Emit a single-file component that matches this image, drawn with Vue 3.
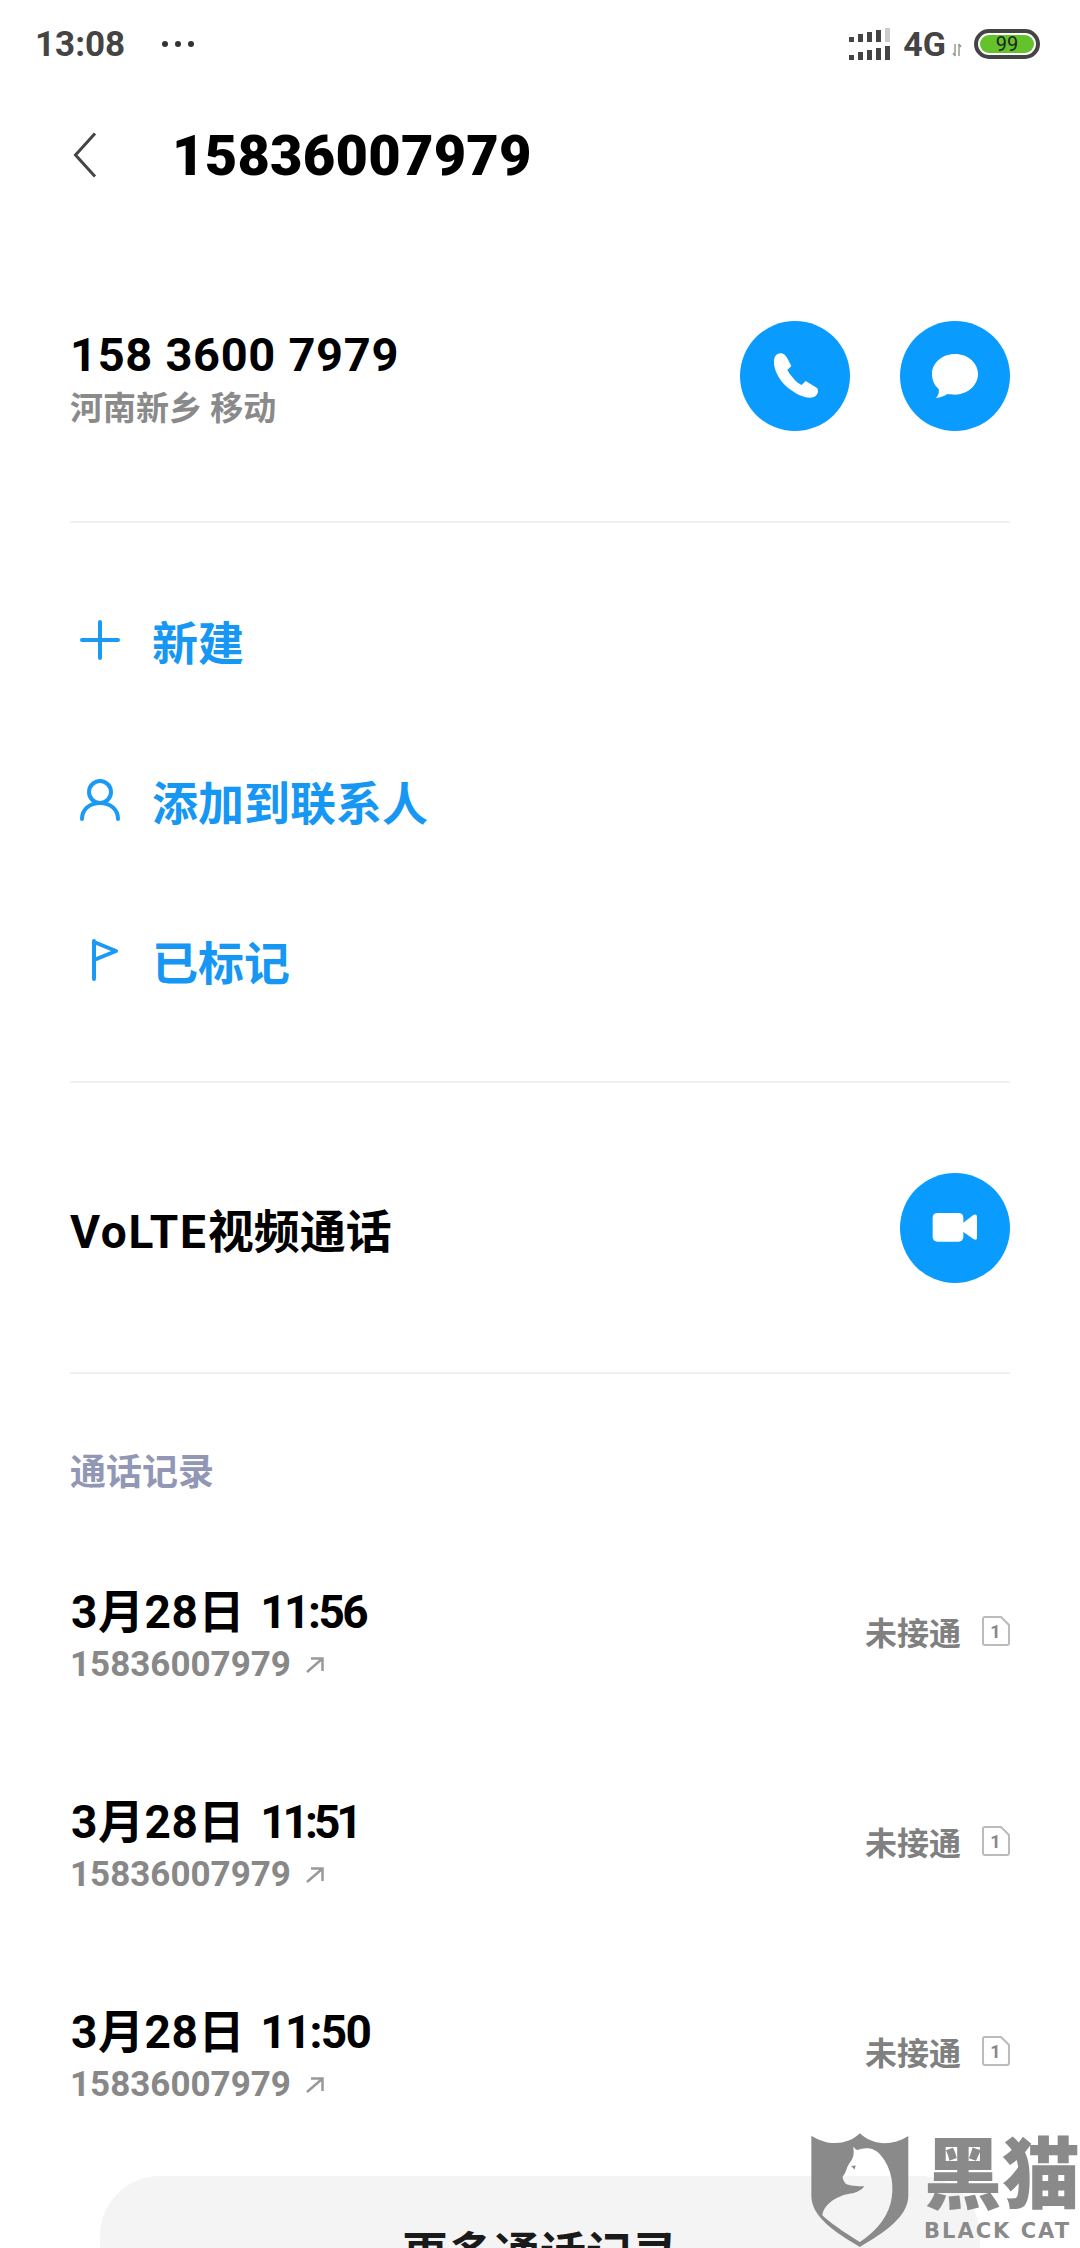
<template>
  <div class="page">
    <div class="status">
      <span class="clock">13:08</span>
      <span class="dots"><i></i><i></i><i></i></span>
      <span class="status-right">
        <svg class="signal" width="42" height="32" viewBox="0 0 42 32">
          <g v-for="y in [0, 18]" :key="y">
            <rect x="0" :y="y + 9" width="5" height="5" fill="#444" />
            <rect x="9" :y="y + 6" width="5" height="8" fill="#444" />
            <rect x="18" :y="y + 4" width="5" height="10" fill="#444" />
            <rect x="27" :y="y + 2" width="5" height="12" fill="#444" />
            <rect x="36" :y="y" width="5" height="14" :fill="y ? '#444' : '#ccc'" />
          </g>
        </svg>
        <span class="net">4G</span>
        <svg class="updown" width="10" height="14" viewBox="0 0 10 14">
          <path d="M3 1v12M3 13l-2-3M7 13V1M7 1l2 3" fill="none" stroke="#999" stroke-width="1.5" />
        </svg>
        <span class="battery"><span class="level">99</span></span>
      </span>
    </div>

    <div class="header">
      <svg class="back" width="24" height="46" viewBox="0 0 24 46">
        <path d="M22 1.5 2.5 23 22 44.5" fill="none" stroke="#444" stroke-width="3" />
      </svg>
      <span class="title">15836007979</span>
    </div>

    <div class="contact section">
      <div class="who">
        <div class="number">158 3600 7979</div>
        <div class="place">河南新乡 移动</div>
      </div>
      <div class="btns">
        <span class="round">
          <svg width="110" height="110" viewBox="120 93 330 330">
            <path fill="#fff" d="M232 192C245 186 255 192 262 205L274 228 262 240C275 262 290 278 305 285L317 273 350 293C358 300 355 315 340 322 320 328 290 315 262 292 235 268 220 235 222 212 222 204 226 196 232 192Z" />
          </svg>
        </span>
        <span class="round">
          <svg width="110" height="110" viewBox="600 93 330 330">
            <path fill="#fff" d="M765 192C805 192 834 220 834 252 834 288 800 314 765 314 755 314 748 313 742 312 733 318 722 323 708 324 716 316 718 305 716 297 703 286 696 270 696 252 696 220 725 192 765 192Z" />
          </svg>
        </span>
      </div>
    </div>

    <div class="actions section">
      <div class="action">
        <svg width="46" height="46" viewBox="0 0 46 46">
          <path d="M23 5v36M5 23h36" fill="none" stroke="#1a9af5" stroke-width="4" stroke-linecap="round" />
        </svg>
        <span>新建</span>
      </div>
      <div class="action">
        <svg width="46" height="46" viewBox="0 0 46 46">
          <circle cx="23" cy="15" r="11" fill="none" stroke="#1a9af5" stroke-width="4" />
          <path d="M5 42C5 32 13 26 23 26S41 32 41 42" fill="none" stroke="#1a9af5" stroke-width="4" stroke-linecap="round" />
        </svg>
        <span>添加到联系人</span>
      </div>
      <div class="action">
        <svg width="46" height="46" viewBox="0 0 46 46">
          <path d="M17 4v38M17 5l22 9-22 9" fill="none" stroke="#1a9af5" stroke-width="4" stroke-linecap="round" stroke-linejoin="round" />
        </svg>
        <span class="marked">已标记</span>
      </div>
    </div>

    <div class="video section">
      <span class="video-label"><span class="volte">VoLTE</span>视频通话</span>
      <span class="round">
        <svg width="110" height="110" viewBox="60 40 330 330">
          <rect x="158" y="160" width="92" height="86" rx="14" fill="#fff" />
          <path fill="#fff" d="M246 192 280 166Q291 162 291 172V234Q291 244 280 238L246 214Z" />
        </svg>
      </span>
    </div>

    <div class="log-label">通话记录</div>
    <div class="log">
      <div v-for="call in calls" :key="call.time" class="call">
        <div>
          <div class="call-time">
            <span class="call-date">3月28日</span>
            <span class="call-clock" :style="{ letterSpacing: call.spacing + 'px' }">{{ call.time }}</span>
          </div>
          <div class="call-num">
            15836007979
            <svg width="18" height="16" viewBox="0 0 18 16">
              <path d="M1 15 16 2M5 1.500h11.500V14" fill="none" stroke="#999" stroke-width="2.500" />
            </svg>
          </div>
        </div>
        <div class="call-state">
          <span>未接通</span>
          <svg width="28" height="30" viewBox="0 0 28 30">
            <path d="M3 1h16l8 8v18a2 2 0 0 1-2 2H3a2 2 0 0 1-2-2V3a2 2 0 0 1 2-2Z" fill="#fff" stroke="#bbb" stroke-width="2" />
            <text x="13.500" y="22" text-anchor="middle" class="sim-num">1</text>
          </svg>
        </div>
      </div>
    </div>

    <div class="more">更多通话记录</div>

    <div class="mark">
      <svg width="98" height="115" viewBox="152 99 293 344">
        <path fill="#8a8a8a" fill-rule="evenodd" d="M153 107C205 140 262 135 298 100 335 135 392 140 443 108V290C440 350 375 395 298 440 222 395 155 350 153 290ZM278 140C284 146 288 150 292 150 310 142 340 140 360 165 395 205 402 262 390 310 375 365 335 400 298 425 250 395 205 365 186 345 190 310 235 285 270 280 290 277 305 268 311 258 290 258 268 258 255 250 248 240 243 232 250 225 258 215 258 200 270 185 278 175 282 160 278 140Z" />
        <path fill="#8a8a8a" d="M272 198 286 196 282 208Z" />
      </svg>
      <div class="mark-text">
        <div class="mark-cn">黑猫</div>
        <div class="mark-en">BLACK CAT</div>
      </div>
    </div>
  </div>
</template>

<script setup>
// the clock digits in the reference are proportional, Roboto's are not
const calls = [
  { time: '11:56', spacing: -2.5 },
  { time: '11:51', spacing: -4 },
  { time: '11:50', spacing: -1.7 }
];
</script>

<style>
html,
body {
  margin: 0;
  background: #fff;
}
</style>

<style scoped>
.page {
  position: relative;
  width: 1080px;
  height: 2248px;
  overflow: hidden;
  background: #fff;
  font-family: Roboto, "Noto Sans CJK SC", sans-serif;
  color: #000;
}

.status {
  display: flex;
  align-items: center;
  height: 88px;
  padding: 0 40px 0 35px;
  box-sizing: border-box;
  color: #444;
}

.clock {
  font-size: 35px;
  font-weight: 700;
}

.dots {
  display: flex;
  gap: 7px;
  margin-left: 37px;
}

.dots i {
  width: 6px;
  height: 6px;
  border-radius: 50%;
  background: #333;
}

.status-right {
  display: flex;
  align-items: center;
  margin-left: auto;
}

.net {
  margin-left: 12px;
  font-size: 34px;
  font-weight: 700;
}

.updown {
  margin: 12px 0 0 6px;
}

.battery {
  display: flex;
  width: 66px;
  height: 30px;
  margin-left: 12px;
  padding: 2px;
  box-sizing: border-box;
  border: 4px solid #444;
  border-radius: 15px;
}

.level {
  flex: 1;
  border-radius: 9px;
  background: #64c22d;
  font-size: 20px;
  line-height: 18px;
  text-align: center;
  color: #222;
}

.header {
  display: flex;
  align-items: center;
  height: 134px;
  padding-left: 73px;
}

.title {
  margin: 2px 0 0 75px;
  font-size: 56px;
  font-weight: 900;
  letter-spacing: 0.25px;
}

.section {
  margin: 0 70px;
  border-bottom: 2px solid #f0f0f0;
}

.contact {
  display: flex;
  align-items: center;
  justify-content: space-between;
  padding: 99px 0 90px;
}

.who {
  padding-top: 4px;
}

.number {
  font-size: 47px;
  font-weight: 700;
  letter-spacing: 0.7px;
}

.place {
  font-size: 33px;
  font-weight: 700;
  color: #8a8a8a;
}

.btns {
  display: flex;
  gap: 50px;
}

.round {
  display: flex;
  width: 110px;
  height: 110px;
  border-radius: 50%;
  background: #0a9bff;
}

.actions {
  padding: 37px 0 41px;
}

.action {
  display: flex;
  align-items: center;
  gap: 29px;
  height: 160px;
  padding-left: 7px;
  font-size: 46px;
  font-weight: 700;
  color: #1597f3;
}

.video {
  display: flex;
  align-items: center;
  justify-content: space-between;
  padding: 90px 0 89px;
}

.video-label {
  font-size: 46px;
  font-weight: 700;
}

.volte {
  letter-spacing: 1.7px;
}

.log-label {
  margin: 76px 70px 0;
  height: 80px;
  font-size: 36px;
  line-height: 46px;
  font-weight: 700;
  color: #9197b5;
}

.call {
  display: flex;
  align-items: center;
  justify-content: space-between;
  height: 210px;
  padding: 0 70px;
}

.call-time {
  display: flex;
  gap: 15px;
  padding-left: 1px;
  font-size: 46px;
  font-weight: 700;
  line-height: 59px;
}

.call-date {
  letter-spacing: 0.6px;
}

.call-num {
  display: flex;
  align-items: center;
  gap: 15px;
  font-size: 35px;
  font-weight: 700;
  line-height: 46px;
  color: #888;
}

.call-state {
  display: flex;
  align-items: center;
  gap: 21px;
  margin-bottom: 8px;
  font-size: 32px;
  font-weight: 700;
  color: #808080;
}

.sim-num {
  font-family: Roboto, sans-serif;
  font-size: 18px;
  fill: #888;
}

.more {
  display: flex;
  justify-content: center;
  align-items: center;
  height: 148px;
  margin: 16px 100px 0;
  border-radius: 60px;
  background: #f4f4f4;
  font-size: 46px;
  font-weight: 700;
  color: #1a1a1a;
}

.mark {
  position: absolute;
  left: 811px;
  top: 2133px;
  display: flex;
  gap: 15px;
}

.mark-text {
  padding-top: 2px;
  color: #8a8a8a;
}

.mark-cn {
  font-size: 78px;
  font-weight: 900;
  line-height: 84px;
  white-space: nowrap;
}

.mark-en {
  margin-top: 1px;
  font-family: "DejaVu Sans", sans-serif;
  font-size: 21px;
  font-weight: 700;
  line-height: 22px;
  letter-spacing: 2px;
  white-space: nowrap;
}
</style>
